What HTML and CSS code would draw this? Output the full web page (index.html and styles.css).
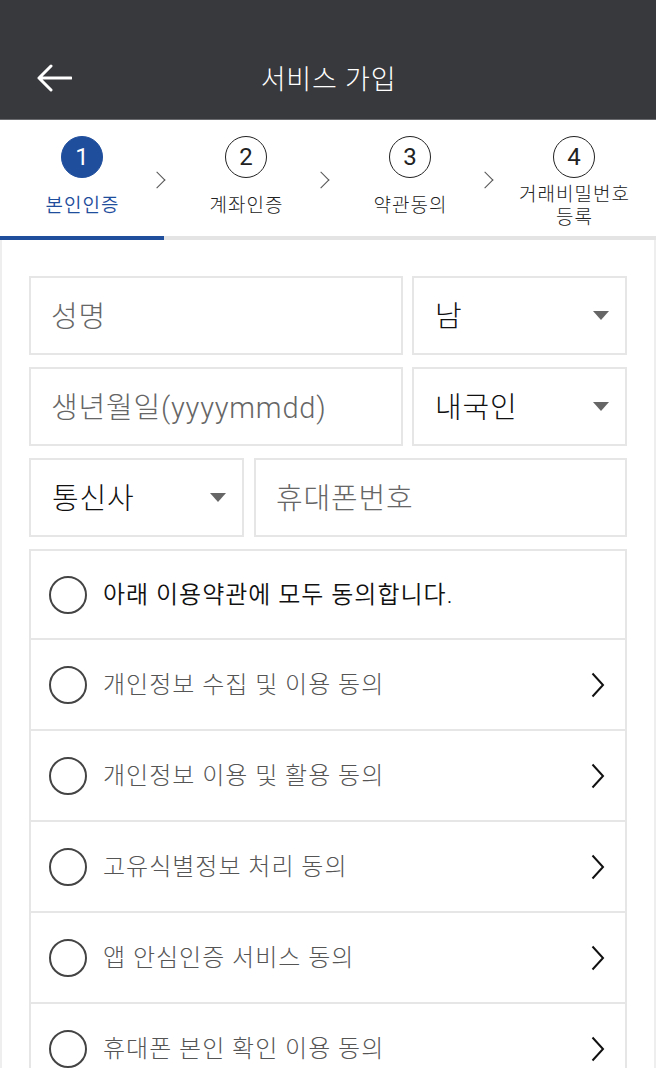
FILE: index.html
```html
<!DOCTYPE html>
<html lang="ko">
<head>
<meta charset="utf-8">
<title>서비스 가입</title>
<link rel="stylesheet" href="styles.css">
</head>
<body>
<header class="appbar">
  <div class="appbar-row">
    <button class="back" aria-label="뒤로">
      <svg width="36" height="28" viewBox="0 0 36 28"><path d="M35 14H3M15 2L3 14l12 12" fill="none" stroke="#fff" stroke-width="3" stroke-linecap="round" stroke-linejoin="round"/></svg>
    </button>
    <h1 class="title">서비스 가입</h1>
  </div>
</header>

<nav class="stepper">
  <div class="step active">
    <span class="num">1</span>
    <span class="label">본인인증</span>
  </div>
  <div class="step">
    <span class="num">2</span>
    <span class="label">계좌인증</span>
  </div>
  <div class="step">
    <span class="num">3</span>
    <span class="label">약관동의</span>
  </div>
  <div class="step last">
    <span class="num">4</span>
    <span class="label">거래비밀번호<br>등록</span>
  </div>
</nav>

<main class="content">
  <div class="row row-a">
    <div class="field placeholder">성명</div>
    <div class="field select">남<span class="caret"></span></div>
  </div>
  <div class="row row-a">
    <div class="field placeholder">생년월일(yyyymmdd)</div>
    <div class="field select">내국인<span class="caret"></span></div>
  </div>
  <div class="row row-b">
    <div class="field select">통신사<span class="caret"></span></div>
    <div class="field placeholder">휴대폰번호</div>
  </div>

  <div class="agree">
    <div class="agree-item all">
      <span class="radio"></span>
      <span class="agree-text">아래 이용약관에 모두 동의합니다.</span>
    </div>
    <div class="agree-item">
      <span class="radio"></span>
      <span class="agree-text">개인정보 수집 및 이용 동의</span>
      <svg class="chev" width="14" height="26" viewBox="0 0 14 26"><path d="M1.5 1.5L12 13 1.5 24.5" fill="none" stroke="#111" stroke-width="2"/></svg>
    </div>
    <div class="agree-item">
      <span class="radio"></span>
      <span class="agree-text">개인정보 이용 및 활용 동의</span>
      <svg class="chev" width="14" height="26" viewBox="0 0 14 26"><path d="M1.5 1.5L12 13 1.5 24.5" fill="none" stroke="#111" stroke-width="2"/></svg>
    </div>
    <div class="agree-item">
      <span class="radio"></span>
      <span class="agree-text">고유식별정보 처리 동의</span>
      <svg class="chev" width="14" height="26" viewBox="0 0 14 26"><path d="M1.5 1.5L12 13 1.5 24.5" fill="none" stroke="#111" stroke-width="2"/></svg>
    </div>
    <div class="agree-item">
      <span class="radio"></span>
      <span class="agree-text">앱 안심인증 서비스 동의</span>
      <svg class="chev" width="14" height="26" viewBox="0 0 14 26"><path d="M1.5 1.5L12 13 1.5 24.5" fill="none" stroke="#111" stroke-width="2"/></svg>
    </div>
    <div class="agree-item">
      <span class="radio"></span>
      <span class="agree-text">휴대폰 본인 확인 이용 동의</span>
      <svg class="chev" width="14" height="26" viewBox="0 0 14 26"><path d="M1.5 1.5L12 13 1.5 24.5" fill="none" stroke="#111" stroke-width="2"/></svg>
    </div>
  </div>
</main>
</body>
</html>
```

FILE: styles.css
```css
* { box-sizing: border-box; }
html, body { margin: 0; padding: 0; }
body {
  width: 656px;
  height: 1068px;
  overflow: hidden;
  background: #fff;
  font-family: Roboto, "Noto Sans CJK KR", "Noto Sans", sans-serif;
  color: #222;
}

.appbar {
  height: 120px;
  background: #38393d;
  padding-top: 36px;
  border-bottom: 1px solid #6a6b6e;
}
.appbar-row {
  height: 83px;
  display: flex;
  align-items: center;
  justify-content: center;
  position: relative;
}
.back {
  position: absolute;
  left: 36px;
  top: 28px;
  padding: 0;
  border: 0;
  background: none;
  display: flex;
}
.title {
  margin: 0 0 0 1px;
  color: #fff;
  font-size: 27px;
  font-weight: 300;
  letter-spacing: 0.8px;
}

.stepper {
  display: grid;
  grid-template-columns: repeat(4, 164px);
  height: 120px;
  background: #fff;
}
.step {
  position: relative;
  display: flex;
  flex-direction: column;
  align-items: center;
  padding-top: 16px;
  border-bottom: 4px solid #e4e4e4;
  color: #222;
}
.step.active { border-bottom-color: #1f4e9d; }
.step:not(.last)::after {
  content: "";
  position: absolute;
  right: 1px;
  top: 54px;
  width: 11px;
  height: 11px;
  border-top: 1.6px solid #555;
  border-right: 1.6px solid #555;
  transform: rotate(45deg);
}
.num {
  width: 42px;
  height: 42px;
  border: 1.6px solid #222;
  border-radius: 50%;
  display: flex;
  align-items: center;
  justify-content: center;
  font-size: 24px;
  line-height: 1;
  color: #222;
}
.step.active .num {
  background: #1f4e9d;
  border-color: #1f4e9d;
  color: #fff;
}
.label {
  flex: 1;
  display: flex;
  align-items: center;
  text-align: center;
  font-size: 19px;
  font-weight: 300;
  line-height: 23px;
  letter-spacing: 1px;
  padding-left: 1px;
  padding-bottom: 3px;
}
.step.active .label { color: #1f4e9d; font-weight: 350; }

.content {
  padding: 36px 27px 0 27px;
  border-left: 2px solid #eee;
  border-right: 2px solid #eee;
  height: 828px;
}
.content > .row { margin-bottom: 12px; }
.row {
  display: grid;
  height: 79px;
}
.row-a {
  grid-template-columns: 374px 215px;
  column-gap: 9px;
}
.row-b {
  grid-template-columns: 215px 373px;
  column-gap: 10px;
}
.field {
  border: 2px solid #e6e6e6;
  display: flex;
  align-items: center;
  padding-left: 20px;
  padding-bottom: 4px;
  font-size: 29px;
  font-weight: 300;
  letter-spacing: 0.8px;
}
.placeholder { color: #666; }
.select {
  color: #111;
  justify-content: space-between;
  padding-left: 21px;
  padding-right: 16px;
}
.caret {
  width: 0;
  height: 0;
  margin-top: 4px;
  border-left: 8px solid transparent;
  border-right: 8px solid transparent;
  border-top: 9px solid #666;
}

.agree {
  border: 2px solid #e6e6e6;
}
.agree-item {
  height: 91px;
  display: flex;
  align-items: center;
  padding: 0 20px 0 18px;
  border-top: 2px solid #e6e6e6;
}
.agree-item.all {
  border-top: 0;
  height: 87px;
}
.radio {
  width: 38px;
  height: 38px;
  border: 2px solid #444;
  border-radius: 50%;
  flex: none;
}
.agree-text {
  flex: 1;
  margin-left: 16px;
  margin-bottom: 4px;
  font-size: 24px;
  font-weight: 300;
  color: #555;
  letter-spacing: 1px;
}
.all .agree-text { color: #111; font-weight: 350; }
.chev { flex: none; }
```
